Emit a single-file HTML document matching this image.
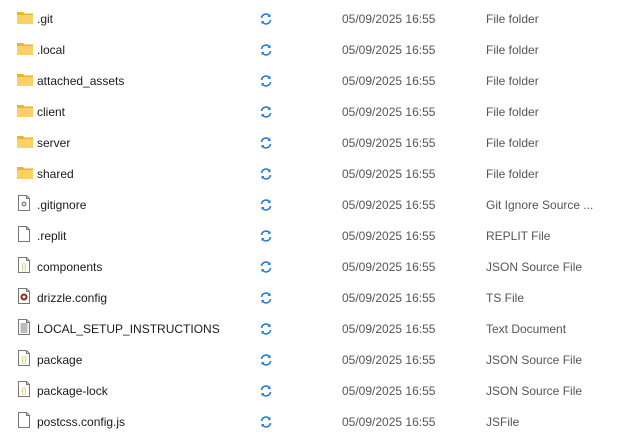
<!DOCTYPE html>
<html><head><style>
body{margin:0;width:623px;height:437px;background:#fff;font-family:"Liberation Sans",sans-serif;font-size:12px;color:#1a1a1a;overflow:hidden;position:relative}
.r{position:absolute;left:0;width:623px;height:20px}
.r span{position:absolute;top:3px;white-space:nowrap}
.n{left:37px}.d{left:342px;color:#555}.t{left:486px;color:#555}
.ic{position:absolute;left:17px;top:2px}
.sy{position:absolute;left:260px;top:4px}
</style></head><body>
<svg width="0" height="0" style="position:absolute">
<defs>
<symbol id="fold" viewBox="0 0 16 14"><path d="M0 1h6l1.5 1.5H16V13H0z" fill="#e8b431"/><path d="M0 4h16v9H0z" fill="#fbd165"/></symbol>
<symbol id="file" viewBox="0 0 14 16"><path d="M1.5 .5h8l3 3v12h-11z" fill="#fff" stroke="#777"/><path d="M9.5 .5v3h3" fill="none" stroke="#777"/></symbol>
<symbol id="sync" viewBox="0 0 12 12"><path d="M1.5 5a4.5 4.5 0 0 1 8-2.2M10.5 7a4.5 4.5 0 0 1-8 2.2" fill="none" stroke="#1e78d7" stroke-width="1.5"/><path d="M10.5 1v3h-3zM1.5 11V8h3z" fill="#1e78d7"/></symbol>
</defs></svg>
<div id="rows"></div>
<script>
const rows=[
["fold",".git","File folder"],["fold",".local","File folder"],["fold","attached_assets","File folder"],["fold","client","File folder"],["fold","server","File folder"],["fold","shared","File folder"],
["gear",".gitignore","Git Ignore Source ..."],["file",".replit","REPLIT File"],["json","components","JSON Source File"],["ts","drizzle.config","TS File"],["txt","LOCAL_SETUP_INSTRUCTIONS","Text Document"],["json","package","JSON Source File"],["json","package-lock","JSON Source File"],["file","postcss.config.js","JSFile"]];
let h="";
rows.forEach((r,i)=>{
let y=9+i*31,ic;
if(r[0]=="fold")ic='<svg class="ic" width="16" height="14" style="top:2px"><use href="#fold"/></svg>';
else{
let extra="";
if(r[0]=="gear")extra='<circle cx="7" cy="9" r="2.5" fill="#888"/><circle cx="7" cy="9" r="1" fill="#fff"/>';
if(r[0]=="json")extra='<text x="7" y="12" font-size="7" text-anchor="middle" fill="#c9b227" font-family="Liberation Sans">{}</text>';
if(r[0]=="ts")extra='<circle cx="7" cy="9" r="3.5" fill="#8a2b1c"/><circle cx="7" cy="9" r="1.5" fill="#fff"/>';
if(r[0]=="txt")extra='<path d="M3.5 5h7M3.5 7h7M3.5 9h7M3.5 11h7M3.5 13h7" stroke="#777"/>';
ic='<svg class="ic" width="14" height="16" style="top:0px"><use href="#file"/>'+extra+'</svg>';}
h+=`<div class="r" style="top:${y}px">${ic}<span class="n">${r[1]}</span><svg class="sy" width="12" height="12"><use href="#sync"/></svg><span class="d">05/09/2025 16:55</span><span class="t">${r[2]}</span></div>`;
});
document.getElementById("rows").innerHTML=h;
</script>
</body></html>
